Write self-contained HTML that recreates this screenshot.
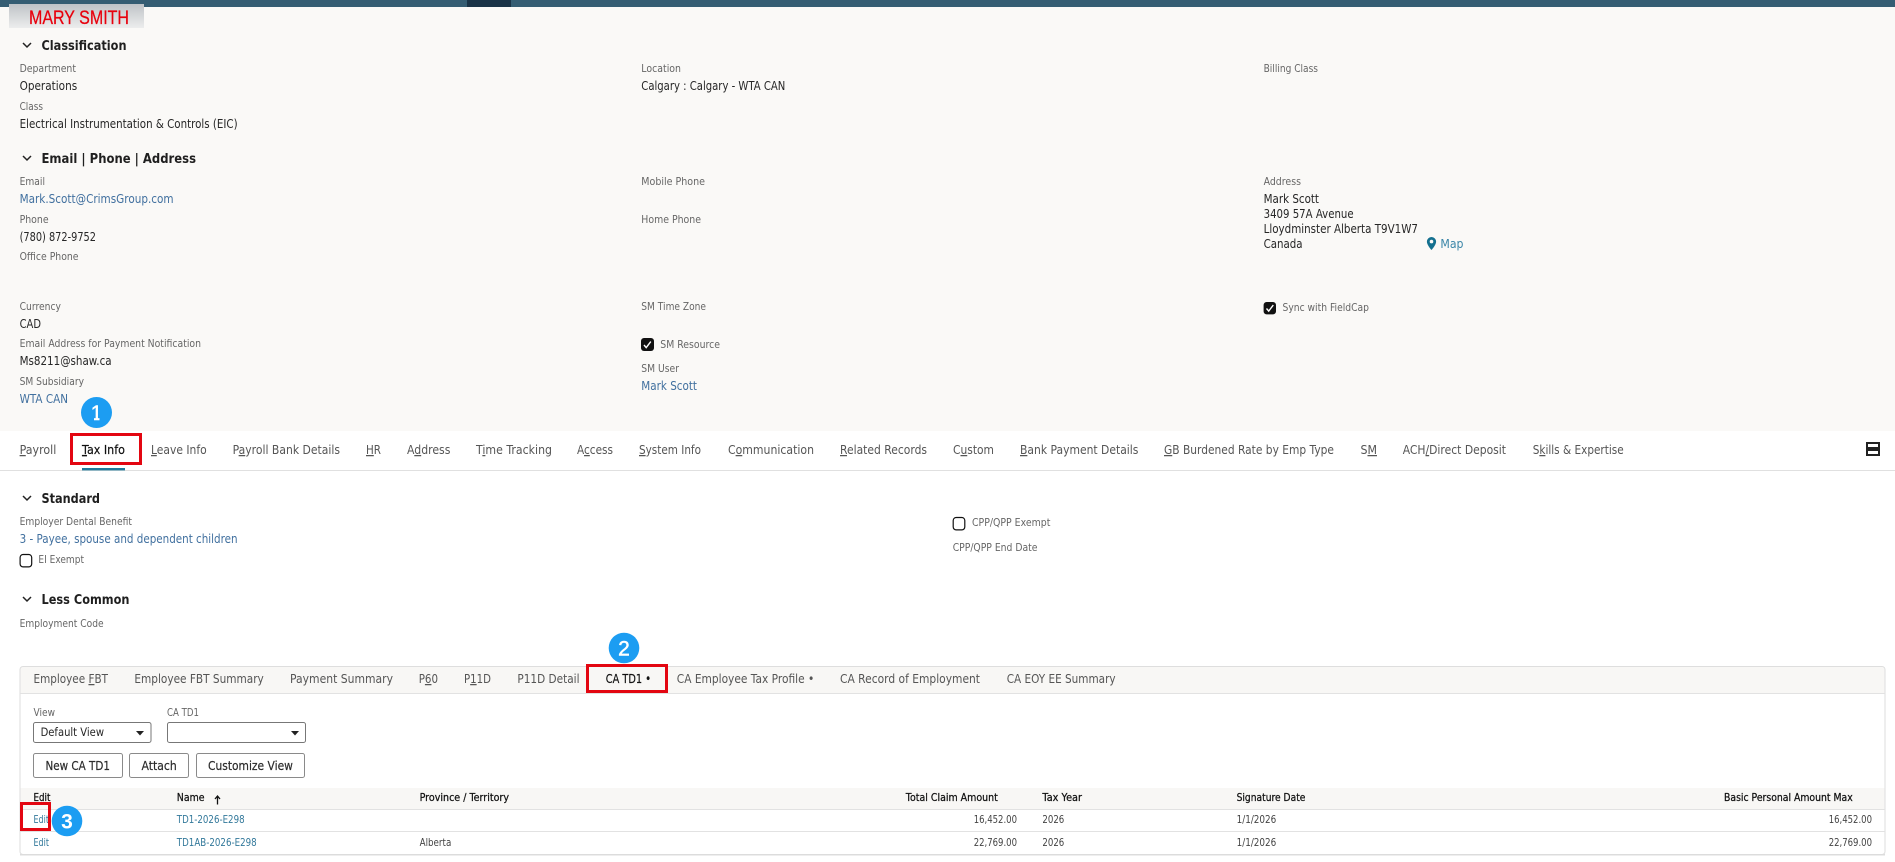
<!DOCTYPE html>
<html lang="en"><head><meta charset="utf-8"><title>Employee</title>
<style>
html,body{margin:0;padding:0;background:#fff;overflow:hidden;width:1895px;height:862px}
svg{display:block}
text{font-family:"DejaVu Sans","Liberation Sans",sans-serif}
.l{font-size:10.5px;fill:#666}
.v{font-size:12.2px;fill:#262626}
.a{font-size:12.2px;fill:#41709f}
.h{font-size:13.5px;font-weight:bold;fill:#1f1f1f}
.t{font-size:12.5px;fill:#555}
.ta{font-size:12.5px;fill:#111;stroke:#111;stroke-width:.2px}
.b{font-size:12.5px;fill:#2b2b2b;stroke:#2b2b2b;stroke-width:.2px}
.th{font-size:10.5px;fill:#111;stroke:#111;stroke-width:.25px}
.d{font-size:10.5px;fill:#444}
.e{font-size:10.5px;fill:#33799b}
.u{text-decoration:underline}
.n{font-family:"Liberation Sans",sans-serif;font-size:21px;font-weight:bold;fill:#fff}
</style></head><body>
<svg width="1895" height="862" viewBox="0 0 1895 862" xmlns="http://www.w3.org/2000/svg">
<defs><linearGradient id="g" x1="0" y1="0" x2="0" y2="1"><stop offset="0" stop-color="#bfc3c7"/><stop offset="1" stop-color="#eceded"/></linearGradient></defs>
<rect width="1895" height="862" fill="#fff"/>
<rect width="1895" height="431" fill="#faf9f7"/>
<rect width="1895" height="7" fill="#355d73"/>
<rect x="467" width="44" height="7" fill="#1a3347"/>
<rect x="9" y="4" width="135" height="24" fill="url(#g)"/>
<text x="29" y="24" textLength="100" lengthAdjust="spacingAndGlyphs" style="font-family:'Liberation Sans',sans-serif;font-size:19px;fill:#e8000d;stroke:#e8000d;stroke-width:.25px">MARY SMITH</text>

<g fill="none" stroke="#222" stroke-width="1.5">
<path d="M23 43l4 4 4-4"/><path d="M23 156l4 4 4-4"/><path d="M23 496l4 4 4-4"/><path d="M23 597l4 4 4-4"/>
</g>
<text class="h" x="41.5" y="50" textLength="85" lengthAdjust="spacingAndGlyphs">Classification</text>
<text class="l" x="19.6" y="72" textLength="56.4" lengthAdjust="spacingAndGlyphs">Department</text>
<text class="v" x="19.6" y="90" textLength="57.6" lengthAdjust="spacingAndGlyphs">Operations</text>
<text class="l" x="19.6" y="110" textLength="23.4" lengthAdjust="spacingAndGlyphs">Class</text>
<text class="v" x="19.6" y="128" textLength="218" lengthAdjust="spacingAndGlyphs">Electrical Instrumentation &amp; Controls (EIC)</text>
<text class="l" x="641.3" y="72" textLength="39.7" lengthAdjust="spacingAndGlyphs">Location</text>
<text class="v" x="641.3" y="90" textLength="144" lengthAdjust="spacingAndGlyphs">Calgary : Calgary - WTA CAN</text>
<text class="l" x="1263.6" y="72" textLength="54.4" lengthAdjust="spacingAndGlyphs">Billing Class</text>

<text class="h" x="41.5" y="163" textLength="154.5" lengthAdjust="spacingAndGlyphs">Email | Phone | Address</text>
<text class="l" x="19.6" y="185" textLength="25.4" lengthAdjust="spacingAndGlyphs">Email</text>
<text class="a" x="19.6" y="203" textLength="154" lengthAdjust="spacingAndGlyphs">Mark.Scott@CrimsGroup.com</text>
<text class="l" x="19.6" y="223" textLength="29" lengthAdjust="spacingAndGlyphs">Phone</text>
<text class="v" x="19.6" y="241" textLength="76.4" lengthAdjust="spacingAndGlyphs">(780) 872-9752</text>
<text class="l" x="19.6" y="260" textLength="58.9" lengthAdjust="spacingAndGlyphs">Office Phone</text>
<text class="l" x="641.3" y="185" textLength="63.7" lengthAdjust="spacingAndGlyphs">Mobile Phone</text>
<text class="l" x="641.3" y="223" textLength="59.7" lengthAdjust="spacingAndGlyphs">Home Phone</text>
<text class="l" x="1263.6" y="185" textLength="37.4" lengthAdjust="spacingAndGlyphs">Address</text>
<text class="v" x="1263.6" y="203" textLength="55.4" lengthAdjust="spacingAndGlyphs">Mark Scott</text>
<text class="v" x="1263.6" y="218" textLength="90" lengthAdjust="spacingAndGlyphs">3409 57A Avenue</text>
<text class="v" x="1263.6" y="233" textLength="154.4" lengthAdjust="spacingAndGlyphs">Lloydminster Alberta T9V1W7</text>
<text class="v" x="1263.6" y="248" textLength="39" lengthAdjust="spacingAndGlyphs">Canada</text>
<path d="M1431.5 237a4.6 4.6 0 0 0-4.6 4.6c0 3.4 4.6 8.4 4.6 8.4s4.6-5 4.6-8.4a4.6 4.6 0 0 0-4.6-4.6zm0 6.4a1.8 1.8 0 1 1 0-3.6 1.8 1.8 0 0 1 0 3.6z" fill="#14708f"/>
<text class="v" x="1440.4" y="248" textLength="23.1" lengthAdjust="spacingAndGlyphs" style="fill:#3b86a8">Map</text>

<text class="l" x="19.6" y="310" textLength="41.4" lengthAdjust="spacingAndGlyphs">Currency</text>
<text class="v" x="19.6" y="328" textLength="21.4" lengthAdjust="spacingAndGlyphs">CAD</text>
<text class="l" x="19.6" y="347" textLength="181.4" lengthAdjust="spacingAndGlyphs">Email Address for Payment Notification</text>
<text class="v" x="19.6" y="365" textLength="92" lengthAdjust="spacingAndGlyphs">Ms8211@shaw.ca</text>
<text class="l" x="19.6" y="385" textLength="64.4" lengthAdjust="spacingAndGlyphs">SM Subsidiary</text>
<text class="a" x="19.6" y="403" textLength="48.4" lengthAdjust="spacingAndGlyphs">WTA CAN</text>
<text class="l" x="641.3" y="310" textLength="64.7" lengthAdjust="spacingAndGlyphs">SM Time Zone</text>
<rect x="641" y="338" width="13" height="13" rx="3" fill="#111"/>
<path d="M644 345l2.2 2.6 4.6-6" fill="none" stroke="#fff" stroke-width="1.4"/>
<text class="l" x="660.3" y="348" textLength="59.7" lengthAdjust="spacingAndGlyphs">SM Resource</text>
<text class="l" x="641.3" y="372" textLength="37.7" lengthAdjust="spacingAndGlyphs">SM User</text>
<text class="a" x="641.3" y="390" textLength="55.7" lengthAdjust="spacingAndGlyphs">Mark Scott</text>
<rect x="1263.6" y="302" width="12.4" height="12.4" rx="3" fill="#111"/>
<path d="M1266.5 308.5l2.2 2.6 4.6-6" fill="none" stroke="#fff" stroke-width="1.4"/>
<text class="l" x="1282.5" y="311" textLength="86.5" lengthAdjust="spacingAndGlyphs">Sync with FieldCap</text>

<!-- main tabs -->
<rect x="0" y="470" width="1895" height="1" fill="#e0e0e0"/>
<rect x="82" y="468" width="43" height="2.4" fill="#1f7a9c"/>
<text class="t" x="19.6" y="454" textLength="36.7" lengthAdjust="spacingAndGlyphs"><tspan class="u">P</tspan>ayroll</text>
<text class="ta" x="82" y="454" textLength="43" lengthAdjust="spacingAndGlyphs"><tspan class="u">T</tspan>ax Info</text>
<text class="t" x="151" y="454" textLength="55.7" lengthAdjust="spacingAndGlyphs"><tspan class="u">L</tspan>eave Info</text>
<text class="t" x="232.6" y="454" textLength="107.4" lengthAdjust="spacingAndGlyphs">P<tspan class="u">a</tspan>yroll Bank Details</text>
<text class="t" x="366" y="454" textLength="15" lengthAdjust="spacingAndGlyphs"><tspan class="u">H</tspan>R</text>
<text class="t" x="407" y="454" textLength="43.4" lengthAdjust="spacingAndGlyphs">A<tspan class="u">d</tspan>dress</text>
<text class="t" x="476" y="454" textLength="76" lengthAdjust="spacingAndGlyphs">T<tspan class="u">i</tspan>me Tracking</text>
<text class="t" x="577" y="454" textLength="36" lengthAdjust="spacingAndGlyphs">A<tspan class="u">c</tspan>cess</text>
<text class="t" x="639" y="454" textLength="62" lengthAdjust="spacingAndGlyphs"><tspan class="u">S</tspan>ystem Info</text>
<text class="t" x="728" y="454" textLength="86" lengthAdjust="spacingAndGlyphs">C<tspan class="u">o</tspan>mmunication</text>
<text class="t" x="840" y="454" textLength="87" lengthAdjust="spacingAndGlyphs"><tspan class="u">R</tspan>elated Records</text>
<text class="t" x="953" y="454" textLength="41" lengthAdjust="spacingAndGlyphs">C<tspan class="u">u</tspan>stom</text>
<text class="t" x="1020" y="454" textLength="118.4" lengthAdjust="spacingAndGlyphs"><tspan class="u">B</tspan>ank Payment Details</text>
<text class="t" x="1164" y="454" textLength="170" lengthAdjust="spacingAndGlyphs"><tspan class="u">G</tspan>B Burdened Rate by Emp Type</text>
<text class="t" x="1360.500" y="454" textLength="16.500" lengthAdjust="spacingAndGlyphs">S<tspan class="u">M</tspan></text>
<text class="t" x="1402.700" y="454" textLength="103.300" lengthAdjust="spacingAndGlyphs">ACH<tspan class="u">/</tspan>Direct Deposit</text>
<text class="t" x="1532.700" y="454" textLength="91" lengthAdjust="spacingAndGlyphs">S<tspan class="u">k</tspan>ills &amp; Expertise</text>
<g fill="none" stroke="#222" stroke-width="2"><rect x="1867" y="443" width="12" height="5"/><rect x="1867" y="450" width="12" height="5"/></g>

<text class="h" x="41.5" y="503" textLength="58.5" lengthAdjust="spacingAndGlyphs">Standard</text>
<text class="l" x="19.6" y="525" textLength="112.4" lengthAdjust="spacingAndGlyphs">Employer Dental Benefit</text>
<text class="a" x="19.6" y="543" textLength="218" lengthAdjust="spacingAndGlyphs">3 - Payee, spouse and dependent children</text>
<rect x="20.1" y="554.5" width="11.6" height="12.4" rx="3" fill="#fff" stroke="#111" stroke-width="1.2"/>
<text class="l" x="38.4" y="563" textLength="45.6" lengthAdjust="spacingAndGlyphs">EI Exempt</text>
<rect x="953.2" y="517.5" width="11.6" height="12.4" rx="3" fill="#fff" stroke="#111" stroke-width="1.2"/>
<text class="l" x="972" y="526" textLength="78.4" lengthAdjust="spacingAndGlyphs">CPP/QPP Exempt</text>
<text class="l" x="952.7" y="551" textLength="84.8" lengthAdjust="spacingAndGlyphs">CPP/QPP End Date</text>
<text class="h" x="41.5" y="604" textLength="88" lengthAdjust="spacingAndGlyphs">Less Common</text>
<text class="l" x="19.6" y="627" textLength="84" lengthAdjust="spacingAndGlyphs">Employment Code</text>

<!-- panel -->
<path d="M22.5 667H1882a2.5 2.5 0 0 1 2.5 2.5V693H20V669.500a2.500 2.500 0 0 1 2.500-2.500z" fill="#f8f7f5"/>
<rect x="20" y="788" width="1865" height="21" fill="#f8f7f5"/>
<rect x="20" y="666.500" width="1865" height="188" rx="3" fill="none" stroke="#dedede"/>
<rect x="20" y="693" width="1865" height="1" fill="#e2e2e2"/>
<rect x="20" y="809" width="1865" height="1" fill="#e2e2e2"/>
<rect x="20" y="831" width="1865" height="1" fill="#e2e2e2"/>
<rect x="20" y="854" width="1865" height="1.500" fill="#dcdcdc"/>

<text class="t" x="33.500" y="683" textLength="74.500" lengthAdjust="spacingAndGlyphs">Employee <tspan class="u">F</tspan>BT</text>
<text class="t" x="134.400" y="683" textLength="129.400" lengthAdjust="spacingAndGlyphs">Employee FBT Summary</text>
<text class="t" x="290" y="683" textLength="103" lengthAdjust="spacingAndGlyphs">Payment Summary</text>
<text class="t" x="418.700" y="683" textLength="19.300" lengthAdjust="spacingAndGlyphs">P<tspan class="u">6</tspan>0</text>
<text class="t" x="464" y="683" textLength="27" lengthAdjust="spacingAndGlyphs">P<tspan class="u">1</tspan>1D</text>
<text class="t" x="517.400" y="683" textLength="62.100" lengthAdjust="spacingAndGlyphs">P11D Detail</text>
<text class="ta" x="605.800" y="683" textLength="45.200" lengthAdjust="spacingAndGlyphs">CA TD1 •</text>
<text class="t" x="676.800" y="683" textLength="137.500" lengthAdjust="spacingAndGlyphs">CA Employee Tax Profile •</text>
<text class="t" x="840" y="683" textLength="140" lengthAdjust="spacingAndGlyphs">CA Record of Employment</text>
<text class="t" x="1006.700" y="683" textLength="108.900" lengthAdjust="spacingAndGlyphs">CA EOY EE Summary</text>

<text class="l" x="33.500" y="716" textLength="21.500" lengthAdjust="spacingAndGlyphs">View</text>
<text class="l" x="167" y="716" textLength="32" lengthAdjust="spacingAndGlyphs">CA TD1</text>
<rect x="33.500" y="722.500" width="117.500" height="20" rx="2" fill="#fff" stroke="#777"/>
<text class="v" x="40.600" y="736" textLength="63.400" lengthAdjust="spacingAndGlyphs" style="font-size:11.500px">Default View</text>
<path d="M136 731h8l-4 4.500z" fill="#222"/>
<rect x="167.500" y="722.500" width="138" height="20" rx="2" fill="#fff" stroke="#777"/>
<path d="M291 731h8l-4 4.500z" fill="#222"/>

<rect x="33.500" y="753.500" width="89" height="24" rx="2" fill="#fff" stroke="#8a8a8a"/>
<rect x="129.500" y="753.500" width="59" height="24" rx="2" fill="#fff" stroke="#8a8a8a"/>
<rect x="196.500" y="753.500" width="108" height="24" rx="2" fill="#fff" stroke="#8a8a8a"/>
<text class="b" x="45.500" y="770" textLength="64.500" lengthAdjust="spacingAndGlyphs">New CA TD1</text>
<text class="b" x="141.500" y="770" textLength="35.300" lengthAdjust="spacingAndGlyphs">Attach</text>
<text class="b" x="208" y="770" textLength="84.900" lengthAdjust="spacingAndGlyphs">Customize View</text>

<text class="th" x="33.500" y="801" textLength="16.900" lengthAdjust="spacingAndGlyphs">Edit</text>
<text class="th" x="176.800" y="801" textLength="27.700" lengthAdjust="spacingAndGlyphs">Name</text>
<path d="M217.500 796v8.500M215 799l2.500-3 2.500 3" fill="none" stroke="#111" stroke-width="1.300"/>
<text class="th" x="419.600" y="801" textLength="89.400" lengthAdjust="spacingAndGlyphs">Province / Territory</text>
<text class="th" x="905.800" y="801" textLength="92" lengthAdjust="spacingAndGlyphs">Total Claim Amount</text>
<text class="th" x="1042.400" y="801" textLength="39.600" lengthAdjust="spacingAndGlyphs">Tax Year</text>
<text class="th" x="1236.600" y="801" textLength="68.800" lengthAdjust="spacingAndGlyphs">Signature Date</text>
<text class="th" x="1724" y="801" textLength="128.700" lengthAdjust="spacingAndGlyphs">Basic Personal Amount Max</text>

<text class="e" x="33.500" y="823" textLength="15.500" lengthAdjust="spacingAndGlyphs">Edit</text>
<text class="e" x="176.800" y="823" textLength="67.800" lengthAdjust="spacingAndGlyphs">TD1-2026-E298</text>
<text class="d" x="973.700" y="823" textLength="43.300" lengthAdjust="spacingAndGlyphs">16,452.00</text>
<text class="d" x="1042.400" y="823" textLength="21.900" lengthAdjust="spacingAndGlyphs">2026</text>
<text class="d" x="1236.600" y="823" textLength="39.700" lengthAdjust="spacingAndGlyphs">1/1/2026</text>
<text class="d" x="1828.700" y="823" textLength="43.300" lengthAdjust="spacingAndGlyphs">16,452.00</text>

<text class="e" x="33.500" y="846" textLength="15.500" lengthAdjust="spacingAndGlyphs">Edit</text>
<text class="e" x="176.800" y="846" textLength="79.900" lengthAdjust="spacingAndGlyphs">TD1AB-2026-E298</text>
<text class="d" x="419.600" y="846" textLength="31.700" lengthAdjust="spacingAndGlyphs">Alberta</text>
<text class="d" x="973.700" y="846" textLength="43.300" lengthAdjust="spacingAndGlyphs">22,769.00</text>
<text class="d" x="1042.400" y="846" textLength="21.900" lengthAdjust="spacingAndGlyphs">2026</text>
<text class="d" x="1236.600" y="846" textLength="39.700" lengthAdjust="spacingAndGlyphs">1/1/2026</text>
<text class="d" x="1828.700" y="846" textLength="43.300" lengthAdjust="spacingAndGlyphs">22,769.00</text>

<!-- annotations -->
<g fill="none" stroke="#e30611" stroke-width="3">
<rect x="71.500" y="434.500" width="69" height="29"/>
<rect x="587.500" y="665.500" width="79" height="26"/>
<rect x="21.500" y="803.500" width="28" height="26"/>
</g>
<circle cx="96.500" cy="412.500" r="15.500" fill="#1c9df2"/>
<text class="n" x="96.500" y="420" text-anchor="middle" style="font-weight:normal;stroke:#fff;stroke-width:.4px">1</text>
<rect x="89" y="417.800" width="5" height="3" fill="#1c9df2"/><rect x="99.500" y="417.800" width="5" height="3" fill="#1c9df2"/>
<circle cx="624" cy="648" r="15.300" fill="#1c9df2"/>
<text class="n" x="624" y="655.500" text-anchor="middle" style="font-weight:normal;stroke:#fff;stroke-width:.5px">2</text>
<circle cx="67" cy="821" r="15.300" fill="#1c9df2"/>
<text class="n" x="67" y="828.500" text-anchor="middle">3</text>
</svg>
</body></html>
